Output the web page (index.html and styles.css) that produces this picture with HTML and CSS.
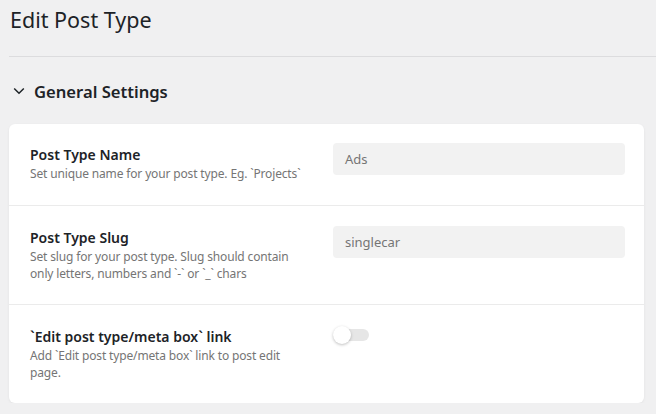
FILE: index.html
```html
<!DOCTYPE html>
<html>
<head>
<meta charset="utf-8">
<link rel="stylesheet" href="styles.css">
</head>
<body>
<div class="wrap">
  <h1 class="page-title">Edit Post Type</h1>
  <hr class="divider">
  <div class="section-head">
    <svg class="chev" width="12" height="8" viewBox="0 0 12 8"><path d="M1.2 1.5 L6 6.2 L10.8 1.5" fill="none" stroke="#1d2327" stroke-width="1.5"/></svg>
    <span class="section-title">General Settings</span>
  </div>
  <div class="card">
    <div class="row first">
      <div class="info">
        <div class="label">Post Type Name</div>
        <div class="desc">Set unique name for your post type. Eg. `Projects`</div>
      </div>
      <div class="control"><div class="input">Ads</div></div>
    </div>
    <div class="row">
      <div class="info">
        <div class="label">Post Type Slug</div>
        <div class="desc">Set slug for your post type. Slug should contain only letters, numbers and `-` or `_` chars</div>
      </div>
      <div class="control"><div class="input">singlecar</div></div>
    </div>
    <div class="row">
      <div class="info">
        <div class="label">`Edit post type/meta box` link</div>
        <div class="desc">Add `Edit post type/meta box` link to post edit page.</div>
      </div>
      <div class="control"><div class="toggle"><span class="knob"></span></div></div>
    </div>
  </div>
</div>
</body>
</html>
```
FILE: styles.css
```css
html, body {
  margin: 0;
  padding: 0;
  background: #f0f0f1;
  font-family: "Noto Sans", "Open Sans", sans-serif;
  color: #1d2327;
}
.wrap {
  padding-left: 9px;
}
.page-title {
  margin: 0;
  padding: 4px 0 0 1px;
  font-size: 21.5px;
  font-weight: 400;
  line-height: 32px;
  height: 56px;
  box-sizing: border-box;
}
.divider {
  margin: 0;
  border: 0;
  border-top: 1px solid #dcdcde;
  height: 0;
}
.section-head {
  display: flex;
  align-items: center;
  height: 67px;
  padding-left: 4px;
  padding-top: 1px;
  box-sizing: border-box;
}
.chev {
  margin-right: 9px;
}
.section-title {
  font-size: 16.6px;
  font-weight: 600;
}
.card {
  background: #fff;
  border-radius: 6px;
  margin-right: 12px;
  box-shadow: 0 1px 3px rgba(0,0,0,0.06);
}
.row {
  display: grid;
  grid-template-columns: 1fr 292px;
  column-gap: 20px;
  padding: 20px 19px 22px 21px;
  border-bottom: 1px solid #ebebeb;
}
.row:last-child {
  border-bottom: 0;
}
.row.first {
  height: 82px;
  box-sizing: border-box;
  padding-top: 19px;
}
.label {
  font-size: 14px;
  font-weight: 600;
  line-height: 20px;
  margin-top: 2px;
}
.desc {
  font-size: 12px;
  letter-spacing: -0.15px;
  line-height: 17px;
  color: #757575;
}
.input {
  height: 32px;
  background: #f2f2f2;
  border-radius: 4px;
  padding: 0 12px;
  line-height: 32px;
  font-size: 13px;
  color: #757575;
}
.toggle {
  position: relative;
  width: 36px;
  height: 12px;
  margin-top: 4px;
  background: #e6e6e6;
  border-radius: 6px;
}
.knob {
  position: absolute;
  left: 0;
  top: -3px;
  width: 18px;
  height: 18px;
  border-radius: 50%;
  background: #fff;
  box-shadow: 0 1px 3px rgba(0,0,0,0.25);
}
```
